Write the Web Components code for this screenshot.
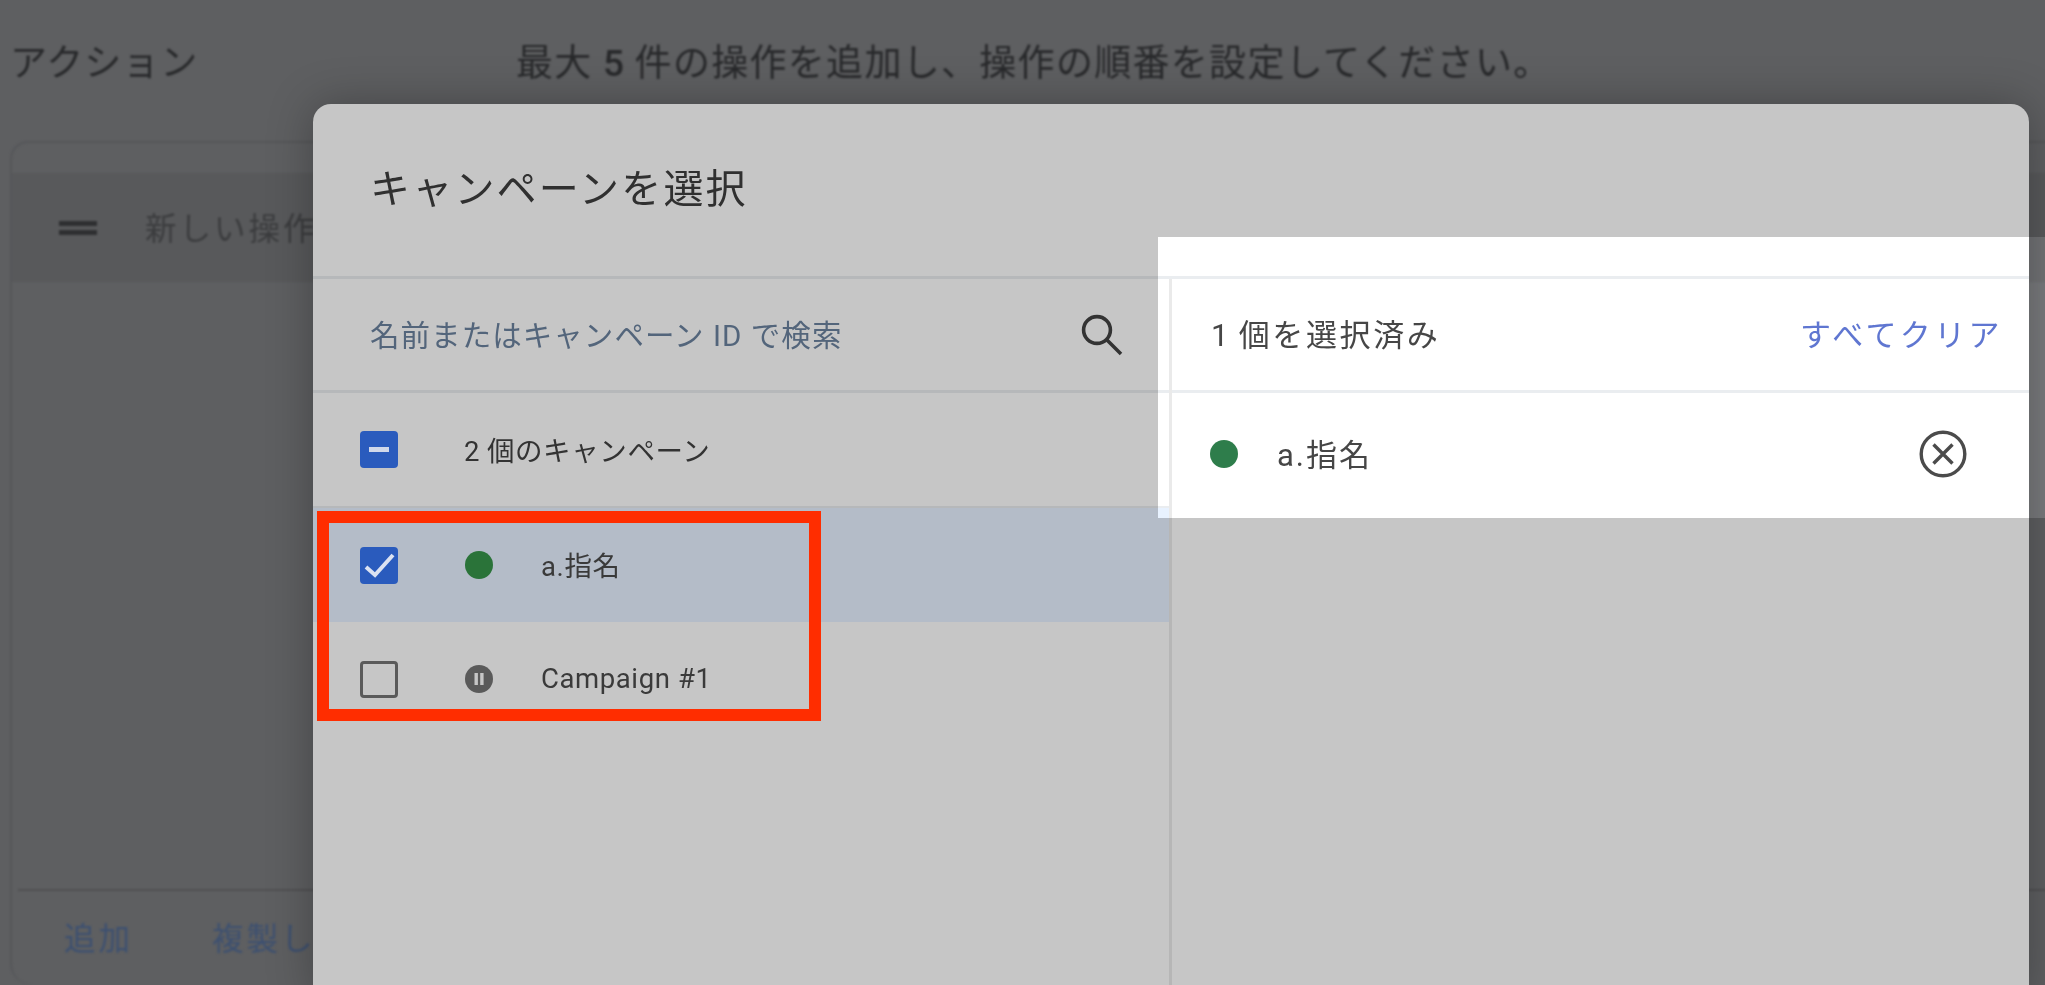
<!DOCTYPE html>
<html lang="ja"><head><meta charset="utf-8"><title>キャンペーンを選択</title>
<style>
html,body{margin:0;padding:0;background:#5e5f61}
body{font-family:Roboto,"Noto Sans CJK JP","Liberation Sans",sans-serif;font-weight:400}
</style></head><body>
<app-screen>
  <action-page></action-page>
  <campaign-dialog></campaign-dialog>
  <red-frame></red-frame>
  <spot-light></spot-light>
</app-screen>
<script>
function def(name, html, setup){
  customElements.define(name, class extends HTMLElement{
    constructor(){super();const r=this.attachShadow({mode:'open'});r.innerHTML=typeof html==='function'?html(this):html;}
    connectedCallback(){ if(setup) setup(this); }
  });
}
def('app-screen',`<style>:host{display:block;position:relative;width:2045px;height:985px;overflow:hidden;isolation:isolate;background:#5e5f61}</style><slot></slot>`);

def('action-page',`<style>
:host{display:flex;flex-direction:column;height:985px;padding-left:10px;box-sizing:border-box;filter:blur(.8px);color:#28292b}
.head{height:141px;display:grid;grid-template-columns:506px 1fr;box-sizing:border-box;padding-top:38px;align-content:start}
.t,.d{font-size:37px;line-height:52px;letter-spacing:1.3px}
.t{letter-spacing:1px}
.d b{font-family:Roboto;font-weight:500;letter-spacing:0}
.card{flex:1;width:2060px;border:2px solid #56575a;border-bottom:0;border-radius:18px 18px 22px 22px;box-sizing:border-box;display:flex;flex-direction:column;padding-top:30px}
.band{height:109px;background:#58595b;display:flex;align-items:center;padding-left:47px;gap:48px;box-sizing:border-box;color:#3b3c3e;font-size:31.5px;letter-spacing:3px}
.band span{margin-bottom:3px}
.eq{width:38px;display:flex;flex-direction:column;gap:4px}
.eq i{display:block;height:5px;background:#2e2f31}
.sp{flex:1}
.foot{height:96px;margin:0 6px;border-top:2px solid #505153;display:flex;align-items:center;gap:79px;padding-left:46px;box-sizing:border-box;font-size:31.5px;letter-spacing:3px;color:#3d5070}
.foot span{margin-bottom:5px}
</style>
<div class="head"><div class="t">アクション</div><div class="d">最大 <b>5</b> 件の操作を追加し、操作の順番を設定してください。</div></div>
<div class="card">
  <div class="band"><div class="eq"><i></i><i></i></div><span>新しい操作</span></div>
  <div class="sp"></div>
  <div class="foot"><span>追加</span><span>複製し</span></div>
</div>`);

def('check-box',h=>{const s=h.getAttribute('state');
 const inner=s==='mixed'?`<svg width="38" height="37" viewBox="0 0 38 37"><rect x="9" y="16" width="20" height="5" fill="#d0d8ea"/></svg>`:s==='checked'?`<svg width="38" height="37" viewBox="0 0 38 37"><path d="M6 20 15 28 33 8" fill="none" stroke="#dbe2f2" stroke-width="4"/></svg>`:'';
 return `<style>:host{display:block;width:38px;height:37px;flex:none}
 div{width:38px;height:37px;box-sizing:border-box;border-radius:4px;${s==='empty'?'border:3.5px solid #5a5a5a':'background:#2a5bbd'}}svg{display:block}</style><div>${inner}</div>`;});

def('status-dot',h=>{const s=h.getAttribute('state');
 const fill=s==='lit'?'#24613a':'#2a7339';
 return `<style>:host{display:block;width:28px;height:28px;flex:none}svg{display:block}</style><svg width="28" height="28" viewBox="0 0 28 28">`+(s==='paused'?`<circle cx="14" cy="14" r="14" fill="#5a5a5a"/><rect x="9.5" y="8" width="3.4" height="12" fill="#c6c6c6"/><rect x="15.2" y="8" width="3.4" height="12" fill="#c6c6c6"/>`:`<circle cx="14" cy="14" r="14" fill="${fill}"/>`)+`</svg>`;});

def('campaign-row',h=>`<style>
:host{display:flex;align-items:center;height:114px;padding-left:47px;box-sizing:border-box;font-size:27.5px;letter-spacing:.6px;color:#3a3a3a}
:host([selected]){background:#b4bcc8}
check-box{margin-right:67px}status-dot{margin-right:48px}
span{margin-bottom:2px}
</style><check-box state="${h.getAttribute('check')}"></check-box><status-dot state="${h.getAttribute('status')}"></status-dot><span><slot></slot></span>`);

def('campaign-dialog',`<style>
:host{position:absolute;left:313px;top:104px;width:1716px;height:900px;background:#c6c6c6;border-radius:18px;box-shadow:0 0 46px rgba(0,0,0,.28);display:flex;flex-direction:column;overflow:hidden;color:#333}
.inner{display:flex;flex-direction:column;height:100%;filter:blur(.7px)}
.title{height:175px;box-sizing:border-box;padding:60px 0 0 57px;font-size:40px;line-height:52px;letter-spacing:2.2px;border-bottom:3px solid #b6b8ba;flex:none;color:#303030}
.cols{flex:1;display:flex;min-height:0}
.left{width:856px;flex:none;border-right:3px solid #b6b6b6}
.right{flex:1}
.bar{height:114px;box-sizing:border-box;border-bottom:3px solid #b6b8ba;display:flex;align-items:center}
.search{padding:0 45px 0 57px;justify-content:space-between;font-size:29.5px;letter-spacing:1.05px;color:#53657b}
.search span,.sel span{margin-bottom:4px}
.count{padding-left:47px;font-size:27.5px;letter-spacing:.6px;color:#333;border-bottom-width:2px;height:115px}
.count check-box{margin-right:66px}
.count span{margin-bottom:2px}
.sel{padding:0 26px 0 39px;justify-content:space-between;font-size:31px;letter-spacing:2.6px;color:#363636}
.sel .clear{color:#4a5ca2;letter-spacing:3.4px}
.item{display:flex;align-items:center;height:122px;padding:0 62px 0 38px;font-size:31px;letter-spacing:2px;color:#363636}
.item status-dot{margin-right:39px}
.item span{flex:1;margin-bottom:4px}
svg{display:block;flex:none}
b{font-weight:400;font-family:Roboto;letter-spacing:0}
</style>
<div class="inner">
<div class="title">キャンペーンを選択</div>
<div class="cols">
 <div class="left">
  <div class="bar search"><span>名前またはキャンペーン ID で検索</span>
   <svg width="44" height="44" viewBox="0 0 44 44" fill="none" stroke="#333" stroke-width="3.6"><circle cx="17" cy="17" r="13.4"/><path d="M27 27 41 41"/></svg></div>
  <div class="bar count"><check-box state="mixed"></check-box><span><b>2</b> 個のキャンペーン</span></div>
  <campaign-row selected check="checked" status="on">a.指名</campaign-row>
  <campaign-row check="empty" status="paused">Campaign #1</campaign-row>
 </div>
 <div class="right">
  <div class="bar sel"><span><b>1</b> 個を選択済み</span><span class="clear">すべてクリア</span></div>
  <div class="item"><status-dot state="lit"></status-dot><span>a.指名</span>
   <svg width="48" height="48" viewBox="0 0 48 48" fill="none" stroke="#3a3a3a" stroke-width="3.4"><circle cx="24" cy="24" r="21.8"/><path d="M14.5 14.5 33.5 33.5M33.5 14.5 14.5 33.5"/></svg></div>
 </div>
</div></div>`);

def('red-frame',`<style>:host{position:absolute;left:317px;top:511px;width:504px;height:210px;box-sizing:border-box;border:12px solid #ff2d00}</style>`);
def('spot-light',`<style>:host{position:absolute;left:1158px;top:237px;width:887px;height:281px;background:#393939;mix-blend-mode:color-dodge}</style>`);
</script>
</body></html>
